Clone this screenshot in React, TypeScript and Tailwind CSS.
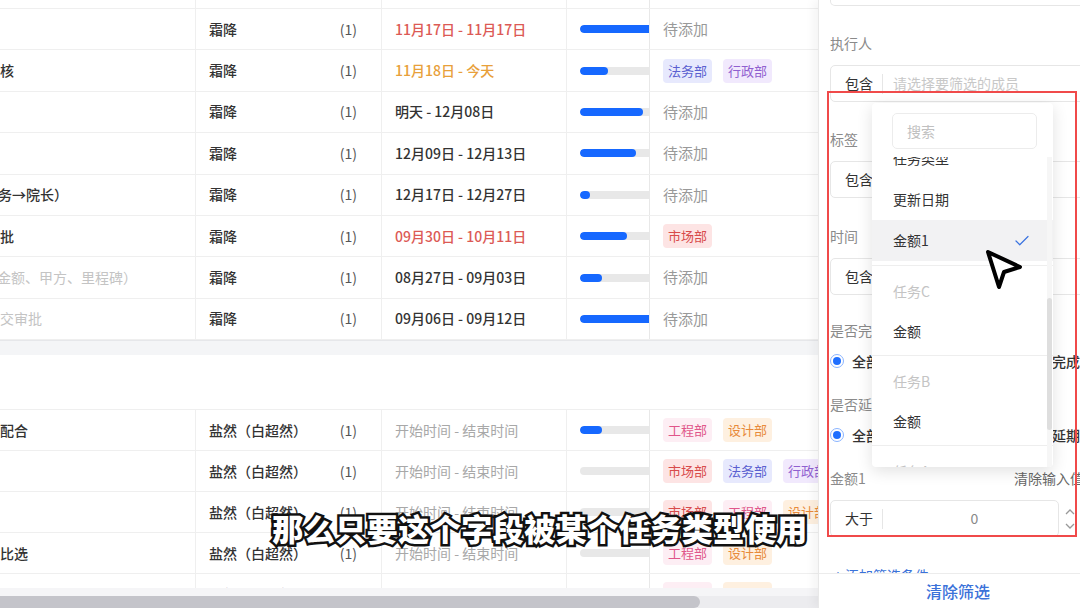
import { Check } from "lucide-react";

type Row = {
  name: string;
  nameCls?: string;
  nameShift?: string;
  owner: string;
  date: string;
  dateCls: string;
  progress: number;
  tags: string[];
};

const tagStyle: Record<string, string> = {
  法务部: "bg-[#e7e9fd] text-[#5a5fd0]",
  行政部: "bg-[#f1e9fd] text-[#9060d0]",
  市场部: "bg-[#fde4e4] text-[#d84b4b]",
  工程部: "bg-[#fdeef4] text-[#e0568a]",
  设计部: "bg-[#fef0e0] text-[#e88a3a]",
};

const dark = "text-[#333] font-medium";
const red = "text-[#dc5a55] font-medium";
const gray = "text-[#a8a8a8]";

const topRows: Row[] = [
  { name: "", owner: "霜降", date: "11月17日 - 11月17日", dateCls: red, progress: 100, tags: [] },
  { name: "核", owner: "霜降", date: "11月18日 - 今天", dateCls: "text-[#e8a03a] font-medium", progress: 35, tags: ["法务部", "行政部"] },
  { name: "", owner: "霜降", date: "明天 - 12月08日", dateCls: dark, progress: 79, tags: [] },
  { name: "）", nameShift: "-ml-[10px]", owner: "霜降", date: "12月09日 - 12月13日", dateCls: dark, progress: 70, tags: [] },
  { name: "务→院长）", nameShift: "-ml-[2px]", owner: "霜降", date: "12月17日 - 12月27日", dateCls: dark, progress: 12, tags: [] },
  { name: "批", owner: "霜降", date: "09月30日 - 10月11日", dateCls: red, progress: 59, tags: ["市场部"] },
  { name: "金额、甲方、里程碑）", nameCls: "text-[#c4c4c4] font-normal", nameShift: "-ml-[3px]", owner: "霜降", date: "08月27日 - 09月03日", dateCls: dark, progress: 27, tags: [] },
  { name: "交审批", nameCls: "text-[#c4c4c4] font-normal", owner: "霜降", date: "09月06日 - 09月12日", dateCls: dark, progress: 100, tags: [] },
];

const lowRows: Row[] = [
  { name: "配合", owner: "盐然（白超然）", date: "开始时间 - 结束时间", dateCls: gray, progress: 27, tags: ["工程部", "设计部"] },
  { name: "", owner: "盐然（白超然）", date: "开始时间 - 结束时间", dateCls: gray, progress: 0, tags: ["市场部", "法务部", "行政部"] },
  { name: "", owner: "盐然（白超然）", date: "开始时间 - 结束时间", dateCls: gray, progress: 0, tags: ["市场部", "工程部", "设计部"] },
  { name: "比选", owner: "盐然（白超然）", date: "开始时间 - 结束时间", dateCls: gray, progress: 0, tags: ["工程部", "设计部"] },
  { name: "", owner: "盐然（白超然）", date: "开始时间 - 结束时间", dateCls: gray, progress: 0, tags: ["工程部", "设计部"] },
];

function TableRow({ row, h }: { row: Row; h: string }) {
  return (
    <div className={`grid grid-cols-[196px_186px_185px_83px_1fr] ${h} shrink-0 border-b border-[#efefef] text-[14px]`}>
      <div className="flex items-center overflow-hidden border-r border-[#efefef] whitespace-nowrap">
        <span className={`${row.nameShift ?? ""} ${row.nameCls ?? "text-[#333] font-medium"}`}>{row.name}</span>
      </div>
      <div className="flex items-center justify-between pl-[13px] pr-[24px] border-r border-[#efefef] whitespace-nowrap">
        <span className="text-[#333] font-medium">{row.owner}</span>
        <span className="text-[#555]">(1)</span>
      </div>
      <div className={`flex items-center pl-[13px] border-r border-[#efefef] whitespace-nowrap ${row.dateCls}`}>
        {row.date}
      </div>
      <div className="flex items-center pl-[13px] overflow-hidden border-r border-[#e8e8e8]">
        <div className="w-[80px] h-[8px] shrink-0 rounded-full bg-[#e8e8e8] overflow-hidden">
          <div className="h-full rounded-full bg-[#1668ff]" style={{ width: `${row.progress}%` }} />
        </div>
      </div>
      <div className="flex items-center gap-[11px] pl-[13px] overflow-hidden whitespace-nowrap">
        {row.tags.length === 0 ? (
          <span className="text-[#999] text-[15px]">待添加</span>
        ) : (
          row.tags.map((t) => (
            <span key={t} className={`h-[24px] px-[5px] rounded-[4px] text-[13px] leading-[24px] ${tagStyle[t]}`}>
              {t}
            </span>
          ))
        )}
      </div>
    </div>
  );
}

function Radio() {
  return (
    <span className="w-[14px] h-[14px] shrink-0 rounded-full border border-[#8ab4ff] p-[2px]">
      <span className="block w-full h-full rounded-full bg-[#1f6fff]" />
    </span>
  );
}

function Label({ children, className = "" }: { children: React.ReactNode; className?: string }) {
  return <div className={`h-[20px] leading-[20px] text-[14px] text-[#8a8a8a] ${className}`}>{children}</div>;
}

function ContainBox({ prefix, placeholder, className = "" }: { prefix: string; placeholder?: string; className?: string }) {
  return (
    <div className={`h-[37px] w-[270px] shrink-0 flex items-center rounded-[5px] border border-[#e6e6e6] text-[14px] ${className}`}>
      <span className="pl-[14px] text-[#333]">{prefix}</span>
      <span className="ml-[9px] w-px h-[20px] bg-[#e6e6e6]" />
      <span className="ml-[10px] text-[#c8c8c8] whitespace-nowrap">{placeholder}</span>
    </div>
  );
}

export default function App() {
  return (
    <div className="relative w-[1080px] h-[608px] overflow-hidden bg-white flex font-['Noto_Sans_CJK_SC','Noto_Sans',sans-serif]">
      {/* Table */}
      <div className="w-[818px] shrink-0 flex flex-col">
        <div className="h-[9px] shrink-0 border-b border-[#efefef] grid grid-cols-[196px_186px_185px_83px_1fr]">
          <div className="border-r border-[#efefef]" />
          <div className="border-r border-[#efefef]" />
          <div className="border-r border-[#efefef]" />
          <div className="border-r border-[#e8e8e8]" />
          <div />
        </div>
        {topRows.map((r, i) => (
          <TableRow key={i} row={r} h="h-[41.4px]" />
        ))}
        <div className="h-[15px] shrink-0 bg-[#f4f5f7] border-t border-[#e6e7ea]" />
        <div className="h-[55px] shrink-0 border-b border-[#efefef]" />
        <div className="h-[178px] shrink-0 flex flex-col overflow-hidden">
          {lowRows.map((r, i) => (
            <TableRow key={i} row={r} h="h-[41px]" />
          ))}
        </div>
        <div className="h-[8px] shrink-0 bg-[#f5f5f7]" />
        <div className="h-[12px] shrink-0 bg-[#ececef] flex">
          <div className="w-[700px] h-full rounded-r-full bg-[#c4c4ca]" />
        </div>
      </div>

      {/* Filter panel */}
      <div className="relative flex-1 flex flex-col border-l border-[#e8e8e8] shadow-[-4px_0_10px_rgba(0,0,0,0.05)] overflow-hidden">
        <div className="h-[573px] shrink-0 overflow-hidden pl-[11px]">
          <div className="h-[6px] w-[270px] rounded-b-[5px] border border-t-0 border-[#e6e6e6]" />
          <Label className="mt-[27px]">执行人</Label>
          <ContainBox prefix="包含" placeholder="请选择要筛选的成员" className="mt-[12px]" />
          <Label className="mt-[27px]">标签</Label>
          <ContainBox prefix="包含" className="mt-[12px]" />
          <Label className="mt-[28px]">时间</Label>
          <ContainBox prefix="包含" className="mt-[12px]" />
          <Label className="mt-[25px]">是否完成</Label>
          <div className="mt-[11px] h-[20px] flex items-center text-[14px] whitespace-nowrap">
            <Radio />
            <span className="ml-[8px] text-[#333] font-medium">全部</span>
            <span className="ml-[60px] w-[14px] h-[14px] rounded-full border border-[#ccc]" />
            <span className="ml-[8px] text-[#333] font-medium">已完成</span>
            <span className="ml-[36px] w-[14px] h-[14px] rounded-full border border-[#ccc]" />
            <span className="ml-[4px] text-[#333] font-medium">未完成</span>
          </div>
          <Label className="mt-[23px]">是否延期</Label>
          <div className="mt-[11px] h-[20px] flex items-center text-[14px] whitespace-nowrap">
            <Radio />
            <span className="ml-[8px] text-[#333] font-medium">全部</span>
            <span className="ml-[60px] w-[14px] h-[14px] rounded-full border border-[#ccc]" />
            <span className="ml-[8px] text-[#333] font-medium">已延期</span>
            <span className="ml-[36px] w-[14px] h-[14px] rounded-full border border-[#ccc]" />
            <span className="ml-[4px] text-[#333] font-medium">未延期</span>
          </div>
          <div className="mt-[23px] h-[20px] flex items-center text-[14px] whitespace-nowrap">
            <span className="w-[184px] shrink-0 text-[#8a8a8a]">金额1</span>
            <span className="text-[#666]">清除输入值</span>
          </div>
          <div className="mt-[12px] flex items-center">
            <div className="h-[37px] w-[229px] shrink-0 flex items-center rounded-[5px] border border-[#e6e6e6] text-[14px]">
              <span className="pl-[14px] text-[#333]">大于</span>
              <span className="ml-[9px] w-px h-[20px] bg-[#e6e6e6]" />
              <span className="flex-1 text-center text-[#888] pl-[8px]">0</span>
            </div>
            <div className="ml-[5px] flex flex-col items-center text-[#999]">
              <svg width="12" height="10" viewBox="0 0 12 10" fill="none" stroke="currentColor" strokeWidth="1.3">
                <path d="M2 7 L6 3 L10 7" />
              </svg>
              <svg width="12" height="10" viewBox="0 0 12 10" fill="none" stroke="currentColor" strokeWidth="1.3" className="mt-[4px]">
                <path d="M2 3 L6 7 L10 3" />
              </svg>
            </div>
          </div>
          <div className="mt-[28px] h-[20px] leading-[20px] pl-[4px] text-[14px] text-[#3b72d9] whitespace-nowrap">
            + 添加筛选条件
          </div>
        </div>
        <div className="flex-1 border-t border-[#ececec] flex items-center pl-[107px]">
          <span className="text-[16px] font-medium text-[#3b72d9]">清除筛选</span>
        </div>

        {/* Red annotation box */}
        <div className="absolute left-[8px] top-[91px] w-[250px] h-[446px] border-2 border-[#f04a4a] pointer-events-none" />

        {/* Dropdown */}
        <div className="absolute left-[53px] top-[103px] w-[181px] h-[364px] bg-white rounded-[4px] shadow-[0_4px_16px_rgba(0,0,0,0.12)] flex flex-col overflow-hidden">
          <div className="mt-[10px] ml-[20px] w-[145px] h-[36px] shrink-0 rounded-[5px] border border-[#ececec] flex items-center pl-[14px] text-[14px] text-[#c0c0c0]">
            搜索
          </div>
          <div className="relative mt-[8px] flex-1 overflow-hidden text-[14px]">
            <div className="-mt-[19px] flex flex-col">
              <div className="h-[41px] flex items-center pl-[21px] text-[#333]">任务类型</div>
              <div className="h-[41px] flex items-center pl-[21px] text-[#333]">更新日期</div>
              <div className="h-[41px] flex items-center justify-between pl-[21px] pr-[22px] bg-[#f2f2f3] text-[#333]">
                <span>金额1</span>
                <Check size={18} strokeWidth={1.6} className="text-[#3b74e0]" />
              </div>
              {["任务C", "任务B", "任务A"].map((g) => (
                <div key={g} className="mt-[4px] border-t border-[#eeeeee] pt-[5px]">
                  <div className="h-[40px] flex items-center pl-[21px] text-[#c4c4c4]">{g}</div>
                  <div className="h-[40px] flex items-center pl-[21px] text-[#333]">金额</div>
                </div>
              ))}
            </div>
            <div className="absolute right-[1px] top-0 bottom-0 w-[5px] bg-[#f6f6f6]">
              <div className="mt-[141px] h-[132px] w-full rounded-full bg-[#dedede]" />
            </div>
          </div>
        </div>
      </div>

      {/* Mouse cursor */}
      <svg className="absolute left-[980px] top-[244px]" width="50" height="50" viewBox="0 0 50 50">
        <path
          d="M8 8 L40 23 L24 28 L19 43 Z"
          fill="white"
          stroke="black"
          strokeWidth="4"
          strokeLinejoin="round"
        />
      </svg>

      {/* Subtitle */}
      <div className="absolute left-0 right-0 top-[509px] flex justify-center pointer-events-none">
        <span className="text-[31px] leading-[38px] font-black text-white tracking-[0.5px] [-webkit-text-stroke:5px_#111] [paint-order:stroke_fill]">
          那么只要这个字段被某个任务类型使用
        </span>
      </div>
    </div>
  );
}
